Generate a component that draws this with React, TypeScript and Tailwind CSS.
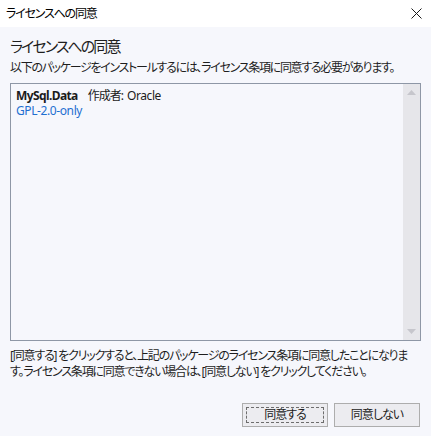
import React from "react";

const font = {
  fontFamily: '"Noto Sans", "Noto Sans CJK JP", sans-serif',
};

export default function App() {
  return (
    <div
      className="w-[431px] h-[436px] bg-[#f6f7fc] flex flex-col text-[#1b1b1b] [font-feature-settings:'palt'] overflow-hidden"
      style={font}
    >
      <div className="h-[27px] bg-white flex items-center justify-between pl-[6px] pr-[9px] shrink-0">
        <span className="text-[12px] leading-[16px] tracking-[-1.2px] text-black">ライセンスへの同意</span>
        <svg width="11" height="11" viewBox="0 0 11 11">
          <path d="M0.5 0.5 L10.5 10.5 M10.5 0.5 L0.5 10.5" stroke="#1a1a1a" strokeWidth="1" />
        </svg>
      </div>
      <div className="flex flex-col px-[10px]">
        <div className="mt-[9px] text-[15px] leading-[20px] tracking-[-1.9px] text-[#1e1e1e]">ライセンスへの同意</div>
        <div className="mt-[3px] text-[12px] leading-[17px] tracking-[-1.3px] text-[#1e1e1e] whitespace-nowrap">
          以下のパッケージをインストールするには、ライセンス条項に同意する必要があります。
        </div>
        <div className="mt-[7px] h-[258px] border border-[#8e97a6] bg-[#f6f7fc] flex">
          <div className="flex-1 pl-[5px] pt-[4px] text-[12px] leading-[15px]">
            <div className="h-[15px] whitespace-nowrap flex items-baseline">
              <span className="font-bold text-[#1b1b1b] tracking-[-0.6px]">MySql.Data</span>
              <span className="ml-[10px] text-[#1b1b1b] tracking-[-1px]">作成者:</span>
              <span className="ml-[4px] text-[#1b1b1b] tracking-[-0.4px]">Oracle</span>
            </div>
            <div className="h-[15px] text-[#1f6fd1] tracking-[-0.4px]">GPL-2.0-only</div>
          </div>
          <div className="w-[17px] bg-[#e6e6ea] flex flex-col justify-between items-center py-[6px]">
            <svg width="9" height="5" viewBox="0 0 9 5">
              <path d="M0 5 L4.5 0 L9 5 Z" fill="#c6c6cc" />
            </svg>
            <svg width="9" height="5" viewBox="0 0 9 5">
              <path d="M0 0 L4.5 5 L9 0 Z" fill="#c6c6cc" />
            </svg>
          </div>
        </div>
        <div className="mt-[7px] text-[12px] leading-[16px] tracking-[-1.2px] text-[#1e1e1e]">
          <div className="whitespace-nowrap">[同意する] をクリックすると、上記のパッケージのライセンス条項に同意したことになりま</div>
          <div className="whitespace-nowrap">す。ライセンス条項に同意できない場合は、[同意しない] をクリックしてください。</div>
        </div>
        <div className="mt-[23px] flex justify-end gap-[6px] pr-[1px]">
          <button className="relative w-[86px] h-[24px] border border-[#adadad] bg-[#ececf0] text-[12px] tracking-[-1px] text-[#1b1b1b] flex items-center justify-center">
            <span className="absolute inset-[3px] border border-dashed border-[#6d6d6d]" />
            同意する
          </button>
          <button className="w-[86px] h-[24px] border border-[#adadad] bg-[#ececf0] text-[12px] tracking-[-1px] text-[#1b1b1b] flex items-center justify-center">
            同意しない
          </button>
        </div>
      </div>
    </div>
  );
}
